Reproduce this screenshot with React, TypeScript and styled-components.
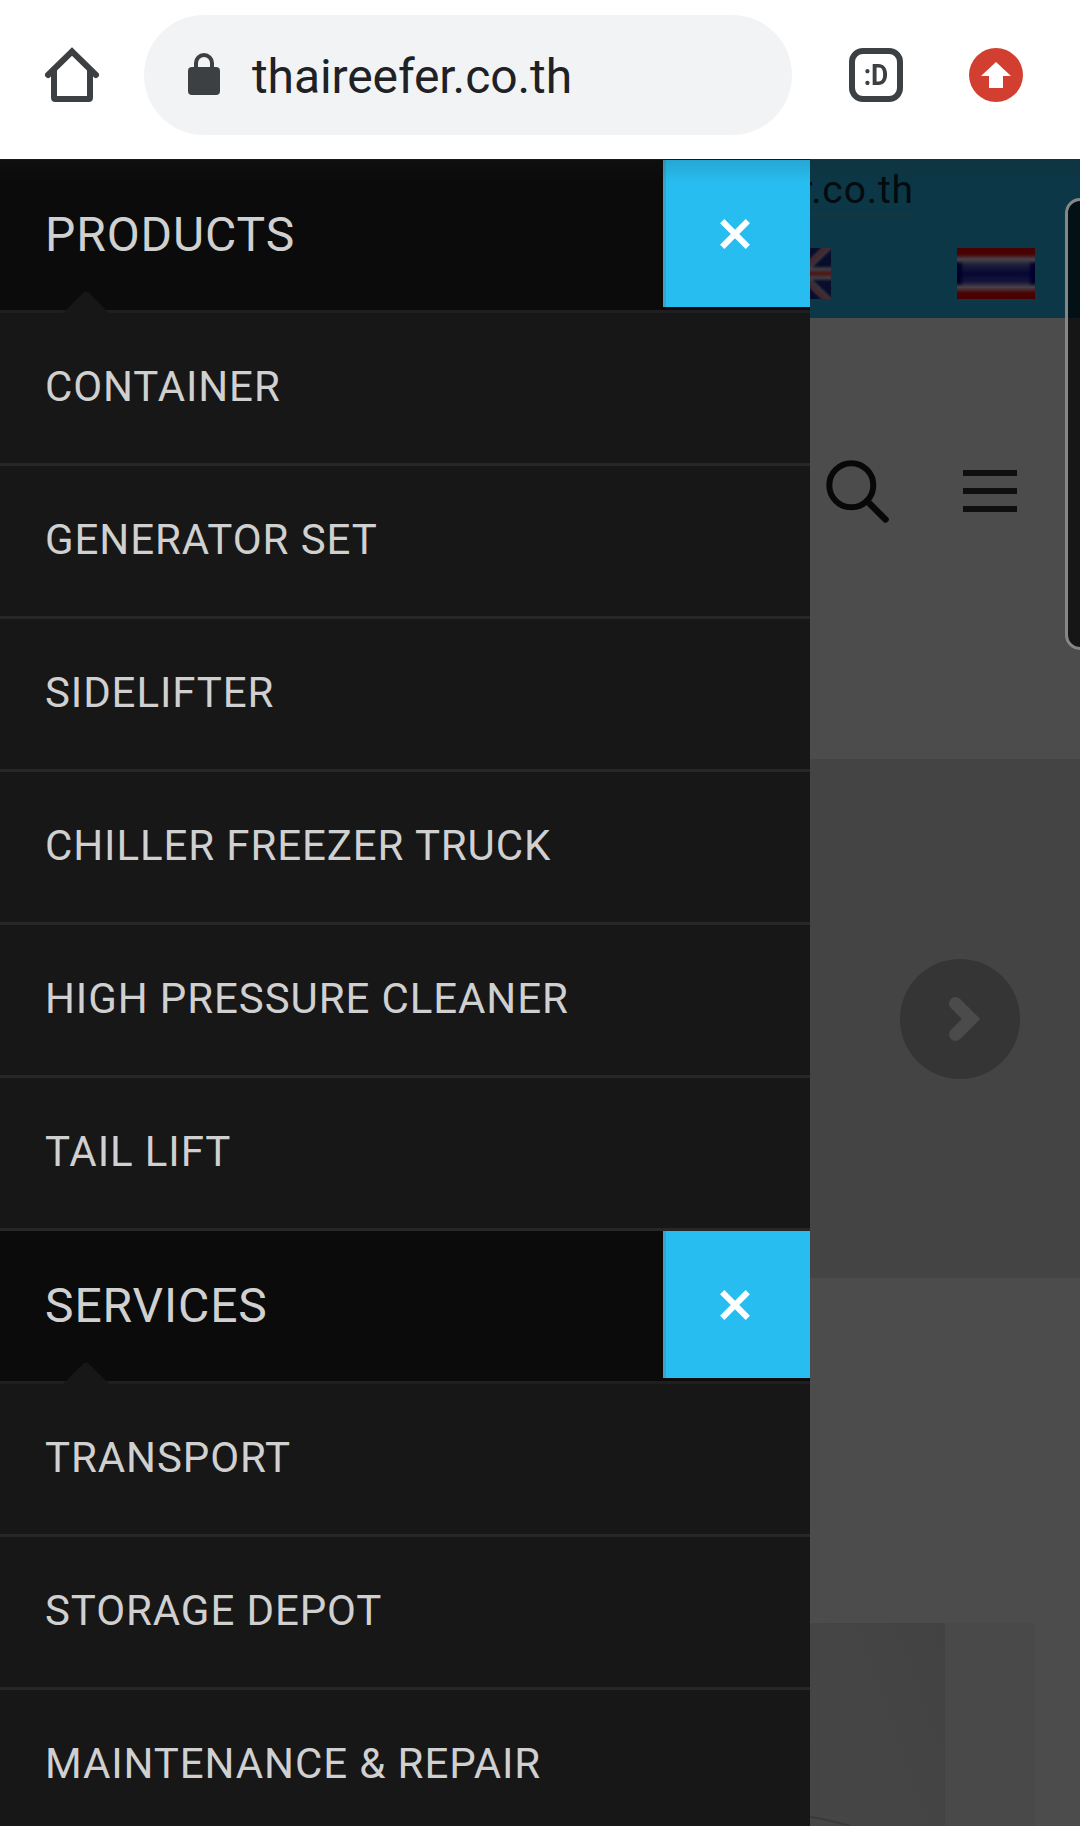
import React from "react";
import styled, { createGlobalStyle, css } from "styled-components";

const GlobalStyle = createGlobalStyle`
  *, *::before, *::after { box-sizing: border-box; }
  body { margin: 0; background: #4c4c4c; font-family: Roboto, sans-serif; }
`;

const Screen = styled.div`
  width: 1080px;
  height: 1826px;
  overflow: hidden;
  display: flex;
  flex-direction: column;
`;

const Toolbar = styled.header`
  position: relative;
  z-index: 1;
  flex: 0 0 159px;
  display: flex;
  align-items: flex-start;
  padding: 15px 57px 0 42px;
  background: #fff;
  &::after {
    content: "";
    position: absolute;
    left: 0;
    right: 0;
    top: 100%;
    height: 24px;
    background: linear-gradient(rgba(36, 36, 36, 0.15), rgba(36, 36, 36, 0));
  }
`;

const ToolSlot = styled.div`
  flex: none;
  height: 120px;
  display: flex;
  align-items: center;
  svg { display: block; }
`;

const HomeSlot = styled(ToolSlot)`
  width: 102px;
`;

const AddressBar = styled.div`
  flex: none;
  width: 648px;
  height: 120px;
  margin-right: 57px;
  padding: 0 0 0 44px;
  display: flex;
  align-items: center;
  border-radius: 60px;
  background: #f1f3f4;
`;

const Lock = styled.svg`
  display: block;
  margin-bottom: 2px;
`;

const Url = styled.span`
  margin-left: 32px;
  font-size: 48px;
  line-height: 56px;
  letter-spacing: -0.1px;
  padding-top: 3px;
  color: #202124;
`;

const TabCounter = styled.div`
  width: 54px;
  height: 54px;
  display: flex;
  align-items: center;
  justify-content: center;
  border: 6px solid #3c4043;
  border-radius: 14px;
  color: #3c4043;
  font: 700 30px/30px Roboto, sans-serif;
`;

const TabLabel = styled.span`
  display: block;
  transform: scaleX(0.88);
`;

const UpdateSlot = styled(ToolSlot)`
  margin-left: 66px;
`;

const Body = styled.div`
  flex: 1;
  min-height: 0;
  display: flex;
`;

const Drawer = styled.nav`
  flex: 0 0 810px;
  overflow: hidden;
  border-top: 1px solid #161818;
  background: #171717;
`;

const rowBase = css`
  height: 153px;
  display: flex;
  align-items: center;
  padding-left: 45px;
  color: #d0d0d0;
`;

const SectionRow = styled.div`
  ${rowBase}
  position: relative;
  align-items: flex-start;
  border-bottom: 3px solid #1f1f1f;
  background: #0b0b0b;
`;

const SectionTitle = styled.span`
  flex: 1;
  font-size: 48px;
  line-height: 150px;
  letter-spacing: 0.9px;
`;

const Notch = styled.svg`
  position: absolute;
  left: 63px;
  bottom: -3px;
`;

const CloseButton = styled.button`
  width: 147px;
  height: 147px;
  padding: 0 6px 0 0;
  display: flex;
  align-items: center;
  justify-content: center;
  border: 0;
  border-left: 3px solid #3da2c4;
  background: #27bdf0;
`;

const Item = styled.div`
  ${rowBase}
  padding-bottom: 4px;
  border-bottom: 3px solid #272727;
  font-size: 42px;
  letter-spacing: 0.9px;
`;

const Page = styled.main`
  position: relative;
  flex: 1;
  overflow: hidden;
  display: flex;
  flex-direction: column;
  background: #4c4c4c;
`;

const TopStrip = styled.div`
  flex: 0 0 159px;
  background: #0c3746;
`;

const Mail = styled.div`
  width: 104px;
  height: 57px;
  display: flex;
  justify-content: flex-end;
  overflow: hidden;
  border-bottom: 3px solid #16353f;
  color: #020b0e;
  font-size: 39px;
  line-height: 62px;
  letter-spacing: 0.9px;
`;

const Flags = styled.div`
  display: flex;
  justify-content: space-between;
  padding: 32px 45px 0 0;
`;

const IconRow = styled.div`
  flex: 0 0 441px;
  display: flex;
  align-items: flex-start;
  padding: 142px 0 0 16px;
`;

const Burger = styled.div`
  display: grid;
  gap: 12px;
  width: 54px;
  margin: 10px 0 0 73px;
`;

const Bar = styled.span`
  height: 6px;
  background: #0f0f0f;
`;

const Slider = styled.section`
  flex: 0 0 519px;
  display: flex;
  justify-content: flex-end;
  padding: 200px 60px 0 0;
  background: #444;
`;

const NextButton = styled.div`
  width: 120px;
  height: 120px;
  border-radius: 50%;
  background: #353535;
`;

const Cards = styled.section`
  flex: 1;
  display: flex;
  margin-top: 345px;
`;

const Photo = styled.div`
  width: 135px;
  display: flex;
  align-items: flex-end;
  background: linear-gradient(70deg, #464646, #444 60%, #424242);
`;

const Card = styled.div`
  width: 90px;
  background: #494949;
`;

const SidePanel = styled.aside`
  position: absolute;
  left: 255px;
  top: 39px;
  width: 60px;
  height: 452px;
  border: 3px solid #868686;
  border-radius: 15px;
  background: rgba(0, 0, 0, 0.7);
  background-clip: padding-box;
`;

const HomeIcon = () => (
  <svg width="60" height="60" viewBox="42 45 60 60" fill="none" stroke="#3c4043" strokeWidth="6">
    <path d="M48 75 72 51.500 96 75" strokeLinecap="round" />
    <path d="M54 69V97.500Q54 99 55.500 99H88.500Q90 99 90 97.500V69" />
  </svg>
);

const LockIcon = () => (
  <Lock width="32" height="42" viewBox="0 0 32 42">
    <path d="M8 17V10a8 8 0 0 1 16 0v7" fill="none" stroke="#3c4043" strokeWidth="4" />
    <rect y="14" width="32" height="28" rx="4" fill="#3c4043" />
  </Lock>
);

const UpdateIcon = () => (
  <svg width="54" height="54" viewBox="0 0 54 54">
    <circle cx="27" cy="27" r="27" fill="#d23f31" />
    <path d="M27 14 42 28H34V40H20V28H12Z" fill="#fff" />
  </svg>
);

const CrossIcon = () => (
  <svg width="30" height="30" viewBox="0 0 30 30">
    <path d="M2.200 2.200 27.800 27.800M27.800 2.200 2.200 27.800" stroke="#fff" strokeWidth="6" />
  </svg>
);

const SearchIcon = () => (
  <svg width="64" height="64" viewBox="0 0 64 64" fill="none" stroke="#080808">
    <circle cx="25.300" cy="25.300" r="22" strokeWidth="6" />
    <path d="M41 41 59.500 59.500" strokeWidth="6.500" strokeLinecap="round" />
  </svg>
);

const UkFlag = () => (
  <svg width="21" height="51" viewBox="0 0 21 51">
    <defs>
      <filter id="soften"><feGaussianBlur stdDeviation="1.2" /></filter>
    </defs>
    <rect width="21" height="51" fill="#080d2b" />
    <g filter="url(#soften)" fill="none">
      <path d="M-4 20 20 -3M-4 31 20 54" stroke="#38343e" strokeWidth="8" />
      <path d="M-4 19 20 -4M-4 32 20 55" stroke="#4c2426" strokeWidth="3" />
      <path d="M-9 25.500H30" stroke="#3e3a42" strokeWidth="13" />
      <path d="M-9 25.500H30" stroke="#501412" strokeWidth="5" />
    </g>
  </svg>
);

const ThaiFlag = () => (
  <svg width="78" height="51" viewBox="0 0 78 51">
    <defs>
      <linearGradient id="stripes" x1="0" y1="0" x2="0" y2="1">
        <stop offset="0" stopColor="#480000" />
        <stop offset=".12" stopColor="#480404" />
        <stop offset=".22" stopColor="#48424a" />
        <stop offset=".34" stopColor="#1c1c3a" />
        <stop offset=".5" stopColor="#070735" />
        <stop offset=".66" stopColor="#15153a" />
        <stop offset=".77" stopColor="#48424a" />
        <stop offset=".88" stopColor="#480404" />
        <stop offset="1" stopColor="#480000" />
      </linearGradient>
      <filter id="edge" x="-200%" width="500%"><feGaussianBlur stdDeviation="1.5" /></filter>
    </defs>
    <rect width="78" height="51" fill="url(#stripes)" />
    <g filter="url(#edge)" fill="#02022a">
      <rect x="-3" y="15" width="8" height="21" />
      <rect x="73" y="15" width="8" height="21" />
    </g>
  </svg>
);

const menu = [
  {
    title: "PRODUCTS",
    items: ["CONTAINER", "GENERATOR SET", "SIDELIFTER", "CHILLER FREEZER TRUCK", "HIGH PRESSURE CLEANER", "TAIL LIFT"],
  },
  { title: "SERVICES", items: ["TRANSPORT", "STORAGE DEPOT", "MAINTENANCE & REPAIR"] },
];

export default function App() {
  return (
    <Screen>
      <GlobalStyle />
      <Toolbar>
        <HomeSlot><HomeIcon /></HomeSlot>
        <AddressBar>
          <LockIcon />
          <Url>thaireefer.co.th</Url>
        </AddressBar>
        <ToolSlot>
          <TabCounter><TabLabel>:D</TabLabel></TabCounter>
        </ToolSlot>
        <UpdateSlot><UpdateIcon /></UpdateSlot>
      </Toolbar>
      <Body>
        <Drawer>
          {menu.map((section) => (
            <React.Fragment key={section.title}>
              <SectionRow>
                <SectionTitle>{section.title}</SectionTitle>
                <CloseButton aria-label="Collapse"><CrossIcon /></CloseButton>
                <Notch width="46" height="22" viewBox="0 0 46 22">
                  <path d="M0 22 20.500 1.500Q23 -.500 25.500 1.500L46 22Z" fill="#171717" />
                </Notch>
              </SectionRow>
              {section.items.map((label) => <Item key={label}>{label}</Item>)}
            </React.Fragment>
          ))}
        </Drawer>
        <Page>
          <TopStrip>
            <Mail>r.co.th</Mail>
            <Flags><UkFlag /><ThaiFlag /></Flags>
          </TopStrip>
          <IconRow>
            <SearchIcon />
            <Burger><Bar /><Bar /><Bar /></Burger>
          </IconRow>
          <Slider>
            <NextButton>
              <svg width="120" height="120" viewBox="0 0 120 120">
                <path d="M55.500 44.500 71 60 55.500 75.500" fill="none" stroke="#4b4b4b" strokeWidth="13" strokeLinecap="round" />
              </svg>
            </NextButton>
          </Slider>
          <Cards>
            <Photo>
              <svg width="135" height="12" viewBox="0 0 135 12">
                <path d="M0 3Q16 5 40 12" fill="none" stroke="#3a3a3a" strokeWidth="2" />
              </svg>
            </Photo>
            <Card />
          </Cards>
          <SidePanel />
        </Page>
      </Body>
    </Screen>
  );
}
